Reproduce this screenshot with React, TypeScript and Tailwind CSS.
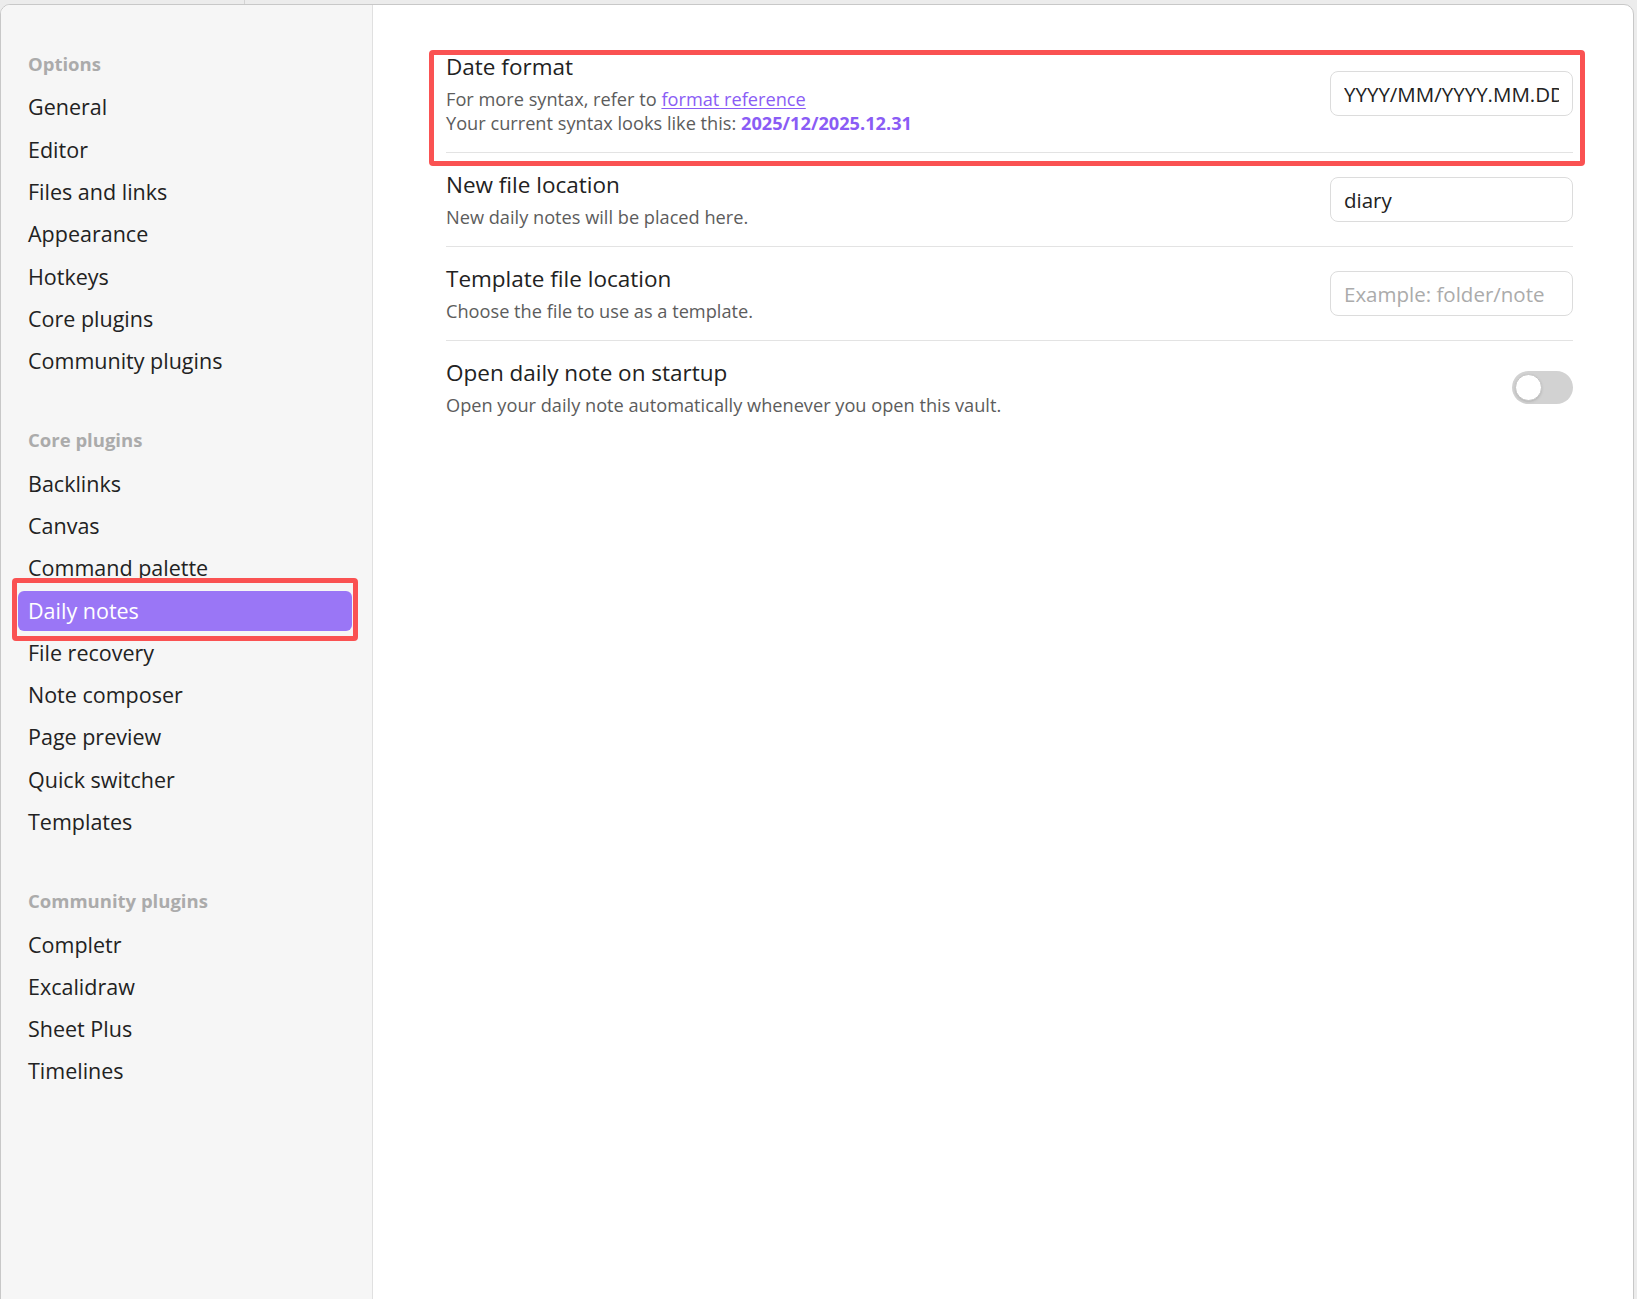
import React from "react"

const groups = [
  {
    title: "Options",
    items: ["General", "Editor", "Files and links", "Appearance", "Hotkeys", "Core plugins", "Community plugins"],
  },
  {
    title: "Core plugins",
    items: [
      "Backlinks",
      "Canvas",
      "Command palette",
      "Daily notes",
      "File recovery",
      "Note composer",
      "Page preview",
      "Quick switcher",
      "Templates",
    ],
  },
  {
    title: "Community plugins",
    items: ["Completr", "Excalidraw", "Sheet Plus", "Timelines"],
  },
]

function NavItem({ label }: { label: string }) {
  const active = label === "Daily notes"
  if (active) {
    return (
      <div className="relative mb-[2.3px]">
        <div className="h-[40px] flex items-center pl-[10px] rounded-[6px] bg-[#9a76f6] text-white">{label}</div>
        {/* annotation box */}
        <div className="absolute left-[-6px] right-[-6px] top-[-13px] bottom-[-10px] border-[5px] border-[#fa5252] rounded-[4px] pointer-events-none" />
      </div>
    )
  }
  return <div className="h-[40px] mb-[2.3px] flex items-center pl-[10px] text-[#222222]">{label}</div>
}

function Sidebar() {
  return (
    <div className="w-[372px] shrink-0 bg-[#f6f6f6] border-r border-[#e0e0e0] pt-[39px] pl-[17px] pr-[20px]">
      {groups.map((g, i) => (
        <div key={g.title} className={i > 0 ? "mt-[39px]" : ""}>
          <div className="h-[40px] mb-[3.5px] flex items-center pl-[10px] text-[18.5px] font-bold text-[#ababab]">
            {g.title}
          </div>
          <div className="text-[21.5px]">
            {g.items.map((it) => (
              <NavItem key={it} label={it} />
            ))}
          </div>
        </div>
      ))}
    </div>
  )
}

function TextInput({ value, placeholder }: { value?: string; placeholder?: string }) {
  return (
    <input
      readOnly
      value={value ?? ""}
      placeholder={placeholder}
      className="w-[243px] h-[45px] px-[13px] rounded-[8px] border border-[#dcdcdc] bg-white text-[20.5px] text-[#222222] placeholder:text-[#ababab] outline-none font-['Open_Sans',sans-serif]"
    />
  )
}

function Toggle() {
  return (
    <div className="w-[61px] h-[33px] rounded-full bg-[#d2d2d2] flex items-center pl-[3px]">
      <div className="w-[27px] h-[27px] rounded-full bg-white border border-[#c4c4c4] shadow-sm" />
    </div>
  )
}

function Row({
  title,
  children,
  control,
  first,
  last,
}: {
  title: string
  children: React.ReactNode
  control: React.ReactNode
  first?: boolean
  last?: boolean
}) {
  return (
    <div
      className={
        "flex items-center justify-between " +
        (first ? "pt-0 " : "pt-[17px] ") +
        "pb-[17px] " +
        (last ? "" : "border-b border-[#e3e3e3]")
      }
    >
      <div className="flex flex-col gap-[5px]">
        <div className="text-[22.5px] leading-[30px] text-[#222222]">{title}</div>
        <div className="text-[18.2px] leading-[24px] text-[#5c5c5c]">{children}</div>
      </div>
      {control}
    </div>
  )
}

export default function App() {
  return (
    <div className="w-[1637px] h-[1299px] overflow-hidden bg-[#ececec] font-['Open_Sans',sans-serif]">
      <div className="h-[4px] flex">
        <div className="w-[245px] border-r border-[#d4d4d4]" />
      </div>
      <div className="w-[1634px] h-[1310px] flex rounded-[10px] border border-[#c8c8c8] overflow-hidden bg-white">
        <Sidebar />
        <div className="flex-1 pl-[73px] pr-[60px] pt-[47px]">
          <div className="relative">
            <div className="absolute left-[-17px] right-[-12px] top-[-2px] bottom-[-13px] border-[5px] border-[#fa5252] rounded-[4px] pointer-events-none" />
            <Row title="Date format" first control={<TextInput value="YYYY/MM/YYYY.MM.DD" />}>
              <div>
                For more syntax, refer to{" "}
                <span className="text-[#8a5cf5] underline underline-offset-2">format reference</span>
              </div>
              <div>
                Your current syntax looks like this:{" "}
                <span className="text-[#8a5cf5] font-bold">2025/12/2025.12.31</span>
              </div>
            </Row>
          </div>
          <Row title="New file location" control={<TextInput value="diary" />}>
            New daily notes will be placed here.
          </Row>
          <Row title="Template file location" control={<TextInput placeholder="Example: folder/note" />}>
            Choose the file to use as a template.
          </Row>
          <Row title="Open daily note on startup" last control={<Toggle />}>
            Open your daily note automatically whenever you open this vault.
          </Row>
        </div>
      </div>
    </div>
  )
}
